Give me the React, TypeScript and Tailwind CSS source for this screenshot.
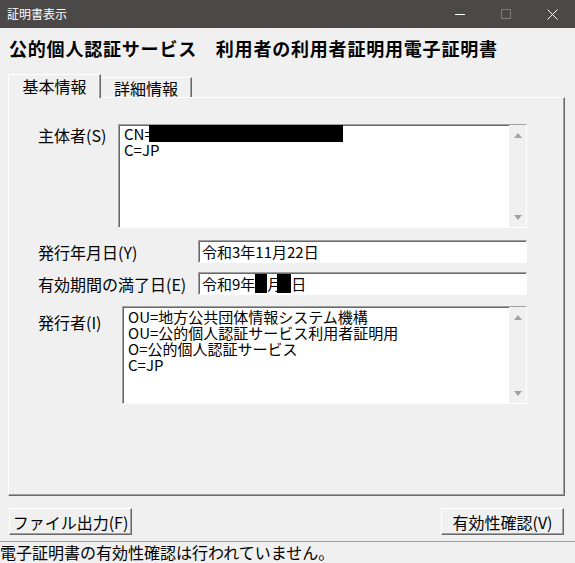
const sunken =
  "border-t border-l border-r border-b border-t-[#a0a0a0] border-l-[#a0a0a0] border-r-white border-b-white shadow-[inset_1px_1px_0_#696969] bg-white";

function UpArrow() {
  return (
    <svg width="8" height="5" viewBox="0 0 8 5">
      <polygon points="0,5 8,5 4,0" fill="#a3a3a3" />
    </svg>
  );
}
function DownArrow() {
  return (
    <svg width="8" height="5" viewBox="0 0 8 5">
      <polygon points="0,0 8,0 4,5" fill="#a3a3a3" />
    </svg>
  );
}

function ScrollBar() {
  return (
    <div className="w-[17px] h-full bg-[#f0f0f0] flex flex-col justify-between items-center pt-[8px] pb-[7px] shrink-0">
      <UpArrow />
      <DownArrow />
    </div>
  );
}

export default function App() {
  return (
    <div className="w-[575px] h-[563px] bg-[#f0f0f0] flex flex-col overflow-hidden text-black font-['Noto_Sans_CJK_JP','Noto_Sans',sans-serif]">
      {/* Title bar */}
      <div className="h-[28px] bg-[#4a4947] flex items-center justify-between shrink-0">
        <span className="pl-[7px] text-[12px] leading-none text-white">証明書表示</span>
        <div className="flex h-full">
          <div className="w-[46px] h-full flex items-center justify-center">
            <div className="w-[10px] h-px bg-white" />
          </div>
          <div className="w-[46px] h-full flex items-center justify-center">
            <div className="w-[10px] h-[10px] border border-[#7a7977]" />
          </div>
          <div className="w-[46px] h-full flex items-center justify-center">
            <svg width="11" height="11" viewBox="0 0 11 11">
              <path d="M0.5 0.5 L10.5 10.5 M10.5 0.5 L0.5 10.5" stroke="#ffffff" strokeWidth="1" />
            </svg>
          </div>
        </div>
      </div>

      {/* Heading */}
      <div className="pl-[9px] pt-[8px] text-[18px] leading-[24px] font-bold tracking-[0.8px] whitespace-nowrap">
        公的個人認証サービス　利用者の利用者証明用電子証明書
      </div>

      {/* Tabs */}
      <div className="flex items-end pl-[8px] mt-[14px] h-[23px]">
        <div className="relative z-10 -mb-px w-[93px] h-[24px] bg-[#f0f0f0] border-t border-l border-r border-t-white border-l-white border-r-[#696969] shadow-[inset_-1px_0_0_#a0a0a0] flex items-start justify-center pt-[1px] text-[16px] leading-[20px]">
          基本情報
        </div>
        <div className="w-[91px] h-[20px] bg-[#f0f0f0] border-t border-r border-t-white border-r-[#696969] shadow-[inset_-1px_0_0_#a0a0a0] flex items-center justify-center text-[16px] leading-[20px]">
          詳細情報
        </div>
      </div>

      {/* Panel */}
      <div className="ml-[8px] w-[557px] h-[399px] shrink-0 border-t border-l border-r border-b border-t-white border-l-white border-r-[#696969] border-b-[#696969] shadow-[inset_-1px_-1px_0_#a0a0a0] flex flex-col">
        {/* Subject */}
        <div className="flex pl-[29px] mt-[26px]">
          <div className="w-[80px] text-[16px] leading-[20px] pt-[1px]">主体者(S)</div>
          <div className={`w-[409px] h-[104px] flex ${sunken}`}>
            <div className="flex-1 pl-[5px] pt-[1px] text-[15px] leading-[16px]">
              <div className="flex items-start whitespace-nowrap">
                <span>CN=</span>
                <span className="inline-block -ml-[4px] w-[194px] h-[17px] bg-black -mt-[1px]" />
              </div>
              <div>C=JP</div>
            </div>
            <ScrollBar />
          </div>
        </div>

        {/* Issue date */}
        <div className="flex items-center pl-[29px] mt-[12px]">
          <div className="w-[160px] text-[16px] leading-[20px]">発行年月日(Y)</div>
          <div className={`w-[329px] h-[23px] flex items-center pl-[3px] text-[15px] leading-[19px] ${sunken}`}>
            令和3年11月22日
          </div>
        </div>

        {/* Expiry */}
        <div className="flex items-center pl-[29px] mt-[9px]">
          <div className="w-[160px] text-[16px] leading-[20px] whitespace-nowrap">有効期間の満了日(E)</div>
          <div className={`w-[329px] h-[23px] flex items-center pl-[3px] text-[15px] leading-[19px] ${sunken}`}>
            <span>令和9年</span>
            <span className="inline-block w-[12px] h-[19px] bg-black" />
            <span>月</span>
            <span className="inline-block -ml-[5px] w-[14px] h-[19px] bg-black" />
            <span>日</span>
          </div>
        </div>

        {/* Issuer */}
        <div className="flex pl-[29px] mt-[11px]">
          <div className="w-[84px] text-[16px] leading-[20px] pt-[6px]">発行者(I)</div>
          <div className={`w-[405px] h-[98px] flex ${sunken}`}>
            <div className="flex-1 pl-[5px] pt-[2px] text-[15px] leading-[16px] whitespace-nowrap">
              <div>OU=地方公共団体情報システム機構</div>
              <div>OU=公的個人認証サービス利用者証明用</div>
              <div>O=公的個人認証サービス</div>
              <div>C=JP</div>
            </div>
            <ScrollBar />
          </div>
        </div>
      </div>

      {/* Buttons */}
      <div className="flex justify-between pl-[9px] pr-[11px] mt-[12px]">
        <div className="w-[123px] h-[27px] bg-[#f0f0f0] border-t border-l border-r border-b border-t-white border-l-white border-r-[#696969] border-b-[#696969] shadow-[inset_-1px_-1px_0_#a0a0a0] flex items-center justify-center text-[16px] leading-[20px]">
          ファイル出力(F)
        </div>
        <div className="w-[123px] h-[27px] bg-[#f0f0f0] border-t border-l border-r border-b border-t-white border-l-white border-r-[#696969] border-b-[#696969] shadow-[inset_-1px_-1px_0_#a0a0a0] flex items-center justify-center text-[16px] leading-[20px]">
          有効性確認(V)
        </div>
      </div>

      {/* Status bar */}
      <div className="mt-[6px] border-t border-[#a0a0a0] text-[16px] leading-[20px] whitespace-nowrap">
        電子証明書の有効性確認は行われていません。
      </div>
    </div>
  );
}
